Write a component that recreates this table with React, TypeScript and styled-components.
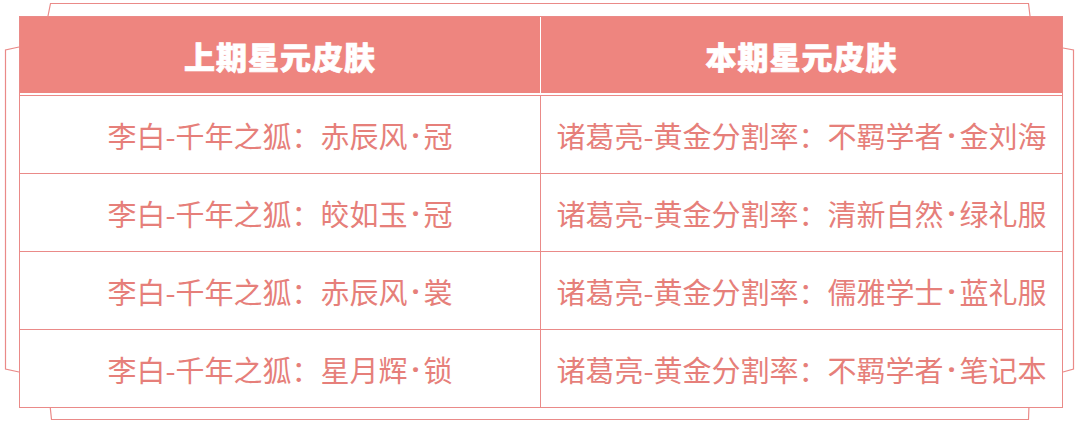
import React from "react";
import styled, { createGlobalStyle } from "styled-components";

const LINE = "#ea8a88";
const SALMON = "#ee857f";
const TEXT = "#e67f7a";

const Global = createGlobalStyle`
  html, body { margin: 0; padding: 0; background: #ffffff; }
  body { font-family: "Noto Sans CJK SC", "Noto Sans", sans-serif; }
`;

const Stage = styled.div`
  position: relative;
  width: 1080px;
  height: 425px;
  box-sizing: border-box;
  padding: 16px 17px 0 19px;
  background: #ffffff;
  overflow: hidden;
`;

const FrameArt = styled.svg`
  position: absolute;
  left: 0;
  top: 0;
  width: 1080px;
  height: 425px;
  pointer-events: none;
`;

const Table = styled.div`
  position: relative;
  width: 1044px;
  box-sizing: border-box;
  display: grid;
  grid-template-columns: 521px 1fr;
  grid-auto-rows: 78px;
  border: 1px solid ${LINE};
  background: #ffffff;
`;

const HeadCell = styled.div<{ $first?: boolean }>`
  display: flex;
  align-items: center;
  justify-content: center;
  height: 76px;
  background: ${SALMON};
  color: #ffffff;
  font-family: "Noto Sans CJK SC", sans-serif;
  font-weight: 900;
  font-size: 31px;
  letter-spacing: 1px;
  -webkit-text-stroke: 0.7px #ffffff;
  border-right: ${(p) => (p.$first ? "1px solid #ffffff" : "none")};
`;

const Cell = styled.div<{ $first?: boolean }>`
  display: flex;
  align-items: center;
  justify-content: center;
  border-top: 1px solid ${LINE};
  border-right: ${(p) => (p.$first ? `1px solid ${LINE}` : "none")};
  color: ${TEXT};
  font-family: "Noto Sans CJK SC", sans-serif;
  font-weight: 400;
  font-size: 29px;
  white-space: nowrap;
`;

const Dot = styled.span`
  font-family: "Noto Sans", "DejaVu Sans", sans-serif;
  font-weight: 700;
  margin: 0 4px;
`;

const rows: [string, string][] = [
  ["李白-千年之狐：赤辰风·冠", "诸葛亮-黄金分割率：不羁学者·金刘海"],
  ["李白-千年之狐：皎如玉·冠", "诸葛亮-黄金分割率：清新自然·绿礼服"],
  ["李白-千年之狐：赤辰风·裳", "诸葛亮-黄金分割率：儒雅学士·蓝礼服"],
  ["李白-千年之狐：星月辉·锁", "诸葛亮-黄金分割率：不羁学者·笔记本"],
];

function Skin({ text }: { text: string }) {
  const [head, tail] = text.split("·");
  return (
    <>
      {head}
      <Dot>·</Dot>
      {tail}
    </>
  );
}

export default function App() {
  return (
    <>
      <Global />
      <Stage>
        <FrameArt viewBox="0 0 1080 425">
          <g fill="none" stroke={LINE} strokeWidth="1.2">
            <polyline points="48,16 50.5,3.5 1028.5,3.5 1030,16" />
            <polyline points="19,47 5.5,50 5.5,369 19,372" />
            <polyline points="1063,48 1073.5,50 1073.5,369 1063,372" />
            <polyline points="50,405 51.5,419.5 1028.5,419.5 1029,405" />
          </g>
        </FrameArt>
        <Table>
          <HeadCell $first>上期星元皮肤</HeadCell>
          <HeadCell>本期星元皮肤</HeadCell>
          {rows.map(([a, b], i) => (
            <React.Fragment key={i}>
              <Cell $first>
                <Skin text={a} />
              </Cell>
              <Cell>
                <Skin text={b} />
              </Cell>
            </React.Fragment>
          ))}
        </Table>
      </Stage>
    </>
  );
}
